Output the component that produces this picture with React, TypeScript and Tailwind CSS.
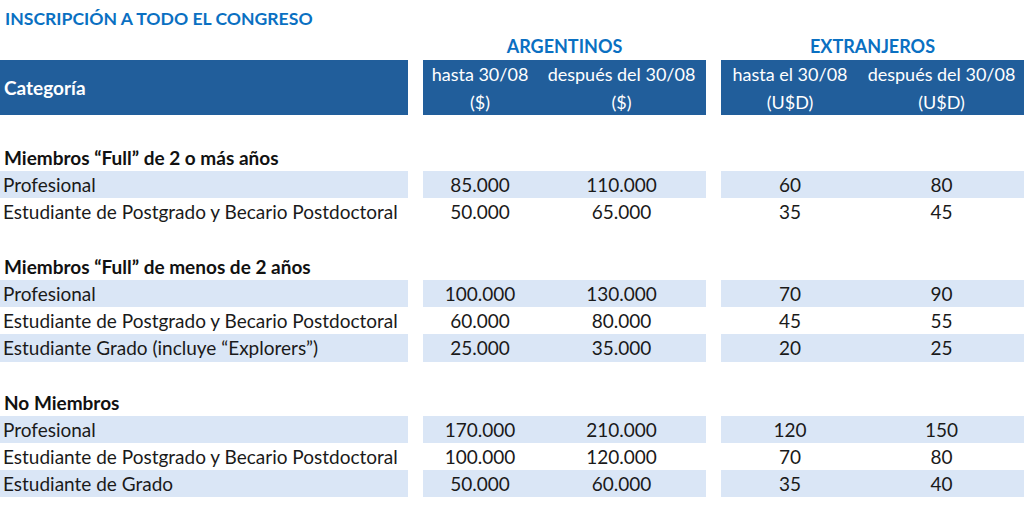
const font = { fontFamily: "Lato, 'Open Sans', sans-serif" };

type Row = { label: string; ars: [string, string]; usd: [string, string] };
type Section = { title: string; rows: Row[] };

const sections: Section[] = [
  {
    title: "Miembros “Full” de 2 o más años",
    rows: [
      { label: "Profesional", ars: ["85.000", "110.000"], usd: ["60", "80"] },
      { label: "Estudiante de Postgrado y Becario Postdoctoral", ars: ["50.000", "65.000"], usd: ["35", "45"] },
    ],
  },
  {
    title: "Miembros “Full” de menos de 2 años",
    rows: [
      { label: "Profesional", ars: ["100.000", "130.000"], usd: ["70", "90"] },
      { label: "Estudiante de Postgrado y Becario Postdoctoral", ars: ["60.000", "80.000"], usd: ["45", "55"] },
      { label: "Estudiante Grado (incluye “Explorers”)", ars: ["25.000", "35.000"], usd: ["20", "25"] },
    ],
  },
  {
    title: "No Miembros",
    rows: [
      { label: "Profesional", ars: ["170.000", "210.000"], usd: ["120", "150"] },
      { label: "Estudiante de Postgrado y Becario Postdoctoral", ars: ["100.000", "120.000"], usd: ["70", "80"] },
      { label: "Estudiante de Grado", ars: ["50.000", "60.000"], usd: ["35", "40"] },
    ],
  },
];

const DataRow = ({ row, shaded }: { row: Row; shaded: boolean }) => {
  const bg = shaded ? "bg-[#dae6f6]" : "";
  return (
    <div className="flex h-[27.2px] text-[19px] leading-none text-[#1a1a1a]">
      <div className={`w-[408px] pl-[3px] flex items-center ${bg}`}>{row.label}</div>
      <div className={`ml-[15px] w-[283px] grid grid-cols-[114px_169px] items-center text-center ${bg}`}>
        <span>{row.ars[0]}</span>
        <span>{row.ars[1]}</span>
      </div>
      <div className={`ml-[15px] w-[303px] grid grid-cols-[138px_165px] items-center text-center ${bg}`}>
        <span>{row.usd[0]}</span>
        <span>{row.usd[1]}</span>
      </div>
    </div>
  );
};

export default function App() {
  return (
    <div className="w-[1024px] h-[510px] bg-white overflow-hidden pt-[5px]" style={font}>
      <div className="h-[28px] pl-[5px] flex items-center text-[17.6px] font-bold text-[#0a70c2]">
        INSCRIPCIÓN A TODO EL CONGRESO
      </div>
      <div className="h-[27px] flex items-center text-[18px] font-bold text-[#0a70c2]">
        <div className="w-[408px]" />
        <div className="ml-[15px] w-[283px] text-center">ARGENTINOS</div>
        <div className="ml-[15px] w-[303px] text-center">EXTRANJEROS</div>
      </div>
      <div className="flex h-[55px] text-white text-[18px] leading-none">
        <div className="w-[408px] bg-[#215e9b] pl-[4px] flex items-center font-bold text-[19px]">Categoría</div>
        <div className="ml-[15px] w-[283px] bg-[#215e9b] grid grid-cols-[114px_169px] grid-rows-2 items-center text-center">
          <span>hasta 30/08</span>
          <span>después del 30/08</span>
          <span className="pt-[2px]">($)</span>
          <span className="pt-[2px]">($)</span>
        </div>
        <div className="ml-[15px] w-[303px] bg-[#215e9b] grid grid-cols-[138px_165px] grid-rows-2 items-center text-center">
          <span>hasta el 30/08</span>
          <span>después del 30/08</span>
          <span className="pt-[2px]">(U$D)</span>
          <span className="pt-[2px]">(U$D)</span>
        </div>
      </div>
      {sections.map((s, i) => (
        <div key={s.title}>
          <div className={i === 0 ? "h-[29px]" : "h-[27.2px]"} />
          <div className="h-[27.2px] pl-[4px] flex items-center text-[19px] leading-none font-bold text-[#111]">{s.title}</div>
          {s.rows.map((r, j) => (
            <DataRow key={j} row={r} shaded={j % 2 === 0} />
          ))}
        </div>
      ))}
    </div>
  );
}
